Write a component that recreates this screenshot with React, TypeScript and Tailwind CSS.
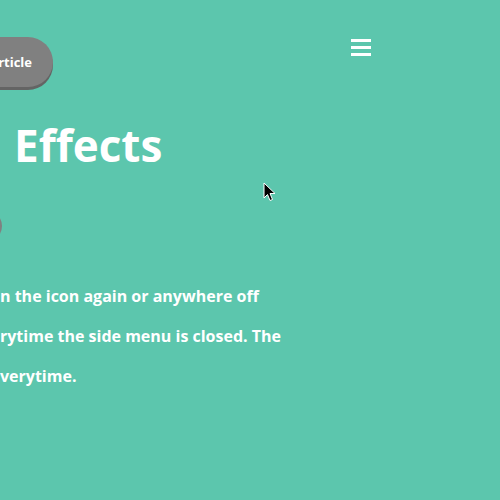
export default function App() {
  return (
    <main className="relative h-[500px] w-[500px] overflow-hidden bg-[#5cc6ad] text-white font-['Open_Sans',sans-serif]">
      {/* top bar */}
      <header className="flex items-start pt-[37px]">
        <div className="flex h-[50px] w-[53px] items-center justify-end rounded-r-full bg-[#808080] pr-[21px] shadow-[0_3px_0_#646464]">
          <span className="text-[13px] font-bold leading-none">rticle</span>
        </div>
        <button className="ml-auto mr-[129px] mt-[2px] flex w-[20px] flex-col gap-[4px]">
          <span className="block h-[3px] w-full bg-white" />
          <span className="block h-[3px] w-full bg-white" />
          <span className="block h-[3px] w-full bg-white" />
        </button>
      </header>

      <h1 className="mt-[36px] pl-[14px] text-[44px] font-bold leading-[44px]">Effects</h1>

      <div className="-ml-[30px] mt-[43px] h-[32px] w-[32px] rounded-full bg-[#808080]" />

      <div className="mt-[34px] text-[16px] font-bold leading-[40px]">
        <p>n the icon again or anywhere off</p>
        <p>rytime the side menu is closed. The</p>
        <p>verytime.</p>
      </div>

      {/* mouse cursor */}
      <svg className="absolute left-[263px] top-[182px]" width="14" height="20" viewBox="0 0 14 20">
        <path d="M1 1 L1 16 L4.5 12.5 L7 18.5 L9.5 17.5 L7 11.5 L12 11.5 Z" fill="#000" stroke="#fff" strokeWidth="1" />
      </svg>
    </main>
  )
}
